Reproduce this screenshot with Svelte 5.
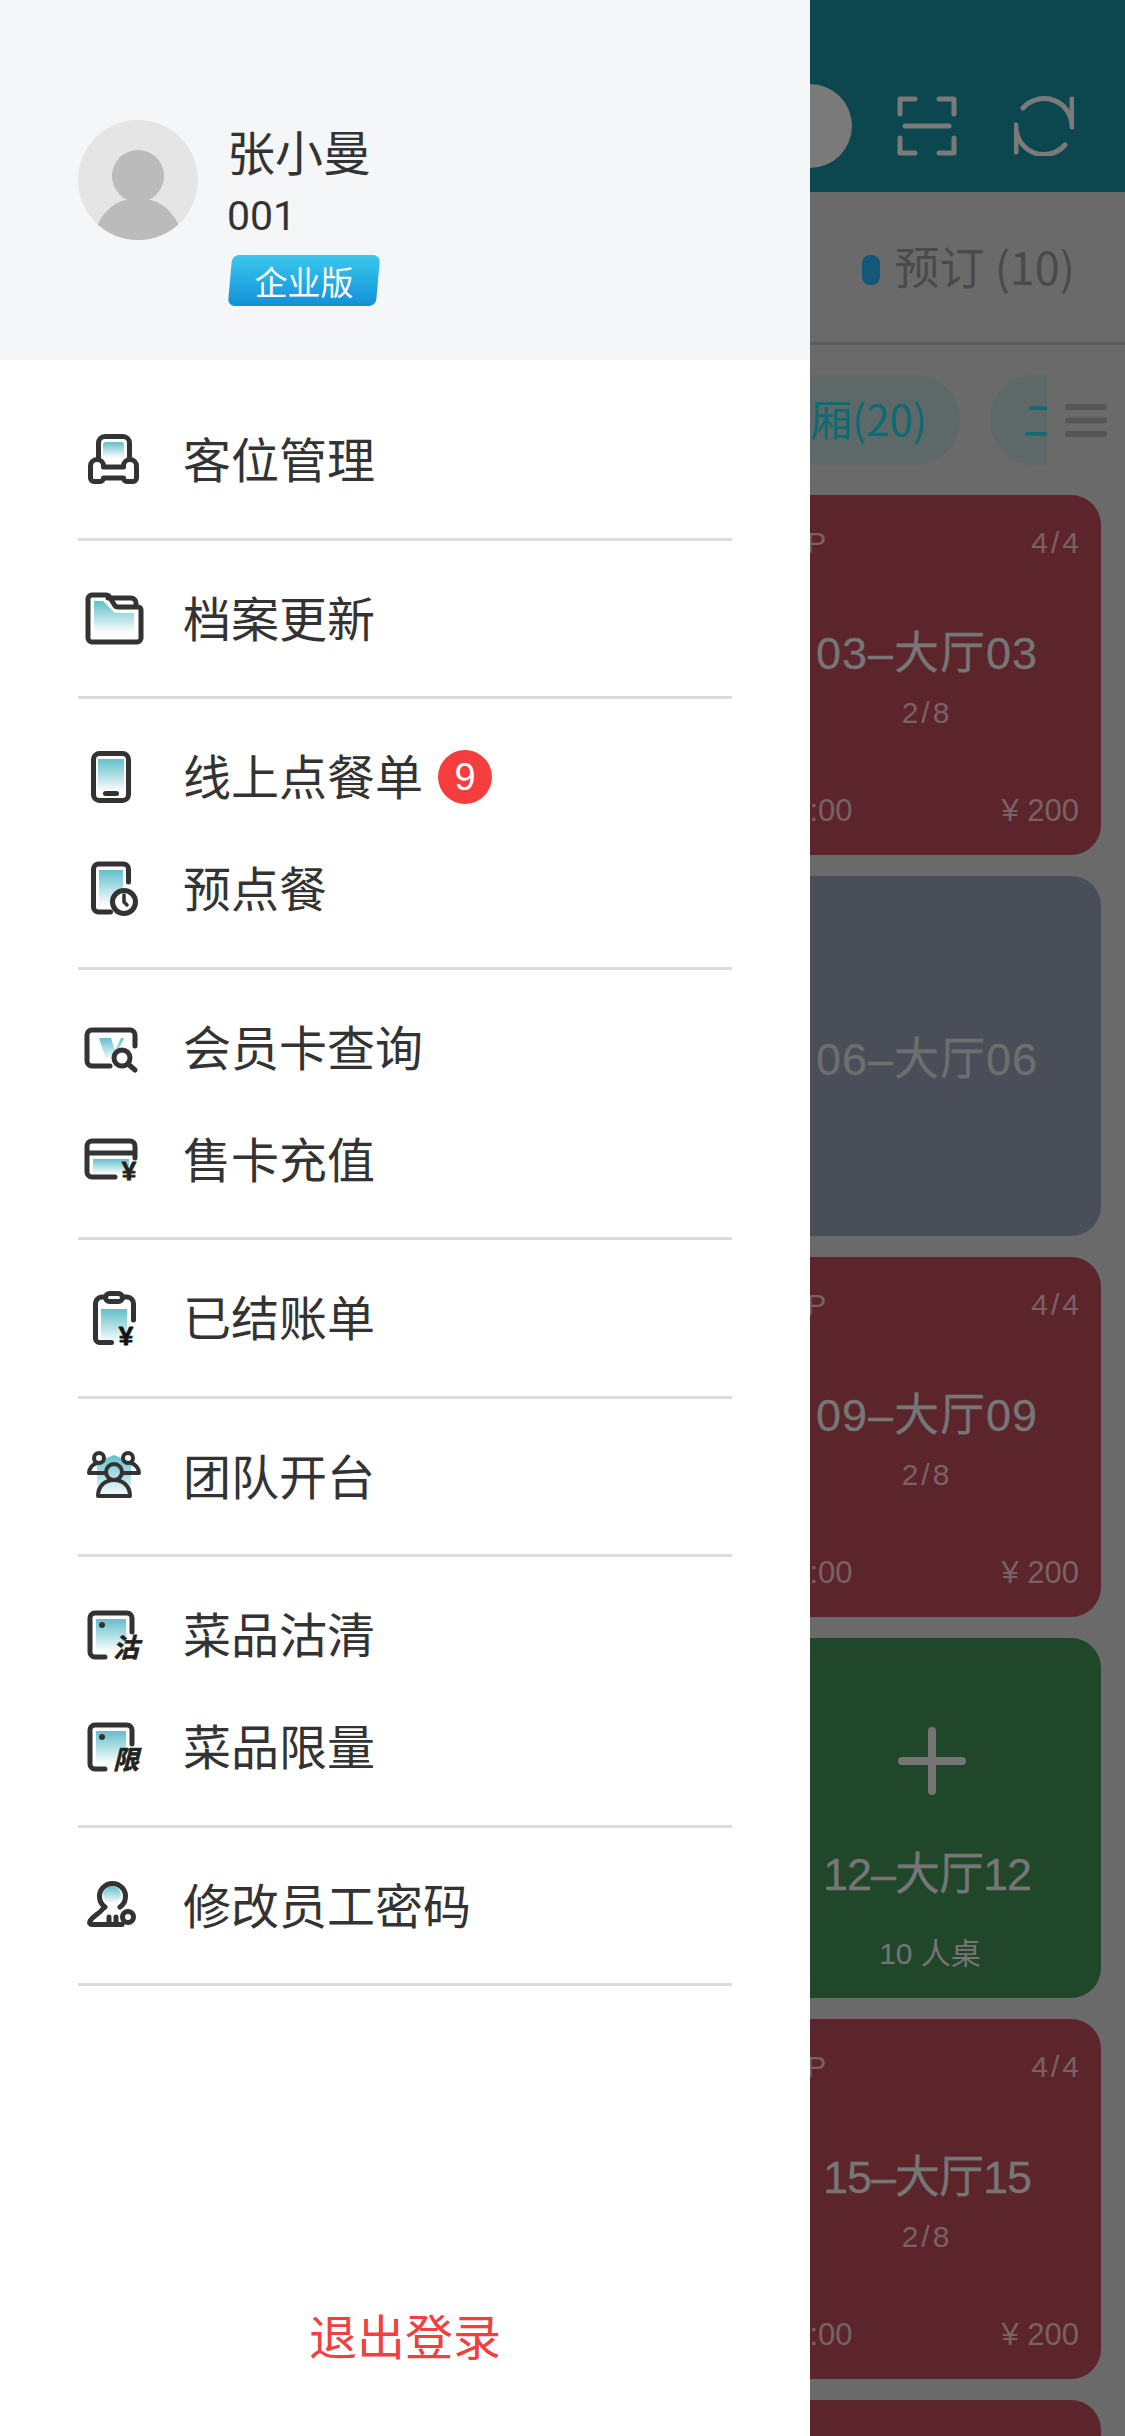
<script>
  const tables = [
    { id: '03', kind: 'busy' },
    { id: '06', kind: 'idle' },
    { id: '09', kind: 'busy' },
    { id: '12', kind: 'free' },
    { id: '15', kind: 'busy' },
    { id: '18', kind: 'blank' }
  ];
  const groups = [
    [{ t: '客位管理', i: 'sofa' }],
    [{ t: '档案更新', i: 'folder' }],
    [{ t: '线上点餐单', i: 'phone', badge: 9 }, { t: '预点餐', i: 'pre' }],
    [{ t: '会员卡查询', i: 'vip' }, { t: '售卡充值', i: 'card' }],
    [{ t: '已结账单', i: 'bill' }],
    [{ t: '团队开台', i: 'team' }],
    [{ t: '菜品沽清', i: 'sold', ch: '沽' }, { t: '菜品限量', i: 'sold', ch: '限' }],
    [{ t: '修改员工密码', i: 'key' }]
  ];
</script>

<div class="screen">
  <div class="page">
    <header class="top">
      <div class="search"></div>
      <svg class="top-icon" viewBox="0 0 60 60" fill="none" stroke="#7a7a7a" stroke-width="5" stroke-linecap="round" stroke-linejoin="round">
        <path d="M3 18V3h15M42 3h15v15M3 42v15h15M42 57h15V42M8 30h44" />
      </svg>
      <svg class="top-icon" viewBox="0 0 60 60" fill="none" stroke="#7a7a7a" stroke-width="5" stroke-linecap="round" stroke-linejoin="round">
        <path d="M9 12A28 28 0 0 1 58 31V3M51 49A28 28 0 0 1 2 29V56" />
      </svg>
    </header>
    <div class="status">
      <i class="dot"></i>
      <span class="status-text">预订 (10)</span>
    </div>
    <div class="chips">
      <div class="chip-clip">
        <span class="chip">包厢(20)</span>
        <span class="chip">二楼(20)</span>
      </div>
      <svg class="menu-icon" viewBox="0 0 42 33" fill="#565656">
        <rect y="0" width="42" height="6" rx="3" /><rect y="13.5" width="42" height="6" rx="3" /><rect y="27" width="42" height="6" rx="3" />
      </svg>
    </div>
    <div class="cards">
      {#each tables as c}
        <article class="card {c.kind}">
          {#if c.kind === 'busy'}
            <div class="row"><span class="vip">VIP</span><span class="frac end">4/4</span></div>
            <h3 class="title" class:narrow={c.id[0] === '1'}>{c.id}–大厅{c.id}</h3>
            <div class="sub frac">2/8</div>
            <div class="row foot"><span>00:00</span><span>¥ 200</span></div>
          {:else if c.kind === 'idle'}
            <h3 class="title mid">{c.id}–大厅{c.id}</h3>
          {:else if c.kind === 'free'}
            <svg class="plus" viewBox="0 0 68 68" fill="#757575">
              <rect x="0" y="30" width="68" height="8" rx="4" /><rect x="30" y="0" width="8" height="68" rx="4" />
            </svg>
            <h3 class="title free-title narrow">{c.id}–大厅{c.id}</h3>
            <div class="seats">10 人桌</div>
          {/if}
        </article>
      {/each}
    </div>
  </div>

  <aside class="drawer">
    <div class="profile">
      <svg class="avatar" viewBox="0 0 120 120">
        <defs><clipPath id="av"><circle cx="60" cy="60" r="60" /></clipPath></defs>
        <circle cx="60" cy="60" r="60" fill="#e5e5e5" />
        <g clip-path="url(#av)" fill="#bbbbbb">
          <circle cx="60" cy="56" r="26" />
          <ellipse cx="60" cy="122" rx="44" ry="44" />
        </g>
      </svg>
      <div class="who">
        <div class="name">张小曼</div>
        <div class="code">001</div>
        <div class="ver"><span>企业版</span></div>
      </div>
    </div>

    <svg width="0" height="0" class="defs">
      <defs>
        <linearGradient id="tl" x1="0" y1="0" x2="0" y2="1">
          <stop offset="0" stop-color="#62bfcb" /><stop offset="1" stop-color="#ffffff" />
        </linearGradient>
      </defs>
    </svg>

    <nav class="menu">
      {#each groups as g}
        <div class="group">
          {#each g as it}
            <div class="item">
              <svg class="ic" viewBox="0 0 60 60" fill="none" stroke="#333" stroke-width="5" stroke-linecap="round" stroke-linejoin="round">
                {#if it.i === 'sofa'}
                  <rect x="19" y="12" width="21" height="16" rx="3" fill="url(#tl)" stroke="none" />
                  <path d="M14.5 27V13a6.5 6.5 0 0 1 6.5-6.5h18a6.5 6.5 0 0 1 6.5 6.5v14" />
                  <path d="M19.5 37H39.5V36a6.5 6.5 0 0 1 13 0V48a3.5 3.5 0 0 1-3.5 3.5h-6a3.5 3.5 0 0 1-3.5-3.5H19.5a3.5 3.5 0 0 1-3.5 3.5H10a3.5 3.5 0 0 1-3.5-3.5V36a6.5 6.5 0 0 1 13 0z" />
                {:else if it.i === 'folder'}
                  <path d="M10 12h9l12 12h19v20H10z" fill="url(#tl)" stroke="none" />
                  <path d="M4 10a4 4 0 0 1 4-4h14a4 4 0 0 1 3.500 2l5 8a4 4 0 0 0 3.500 2h20a3 3 0 0 1 3 3v28a4 4 0 0 1-4 4H8a4 4 0 0 1-4-4z" />
                  <path d="M24 9h23a5 5 0 0 1 5 5v3" />
                {:else if it.i === 'phone'}
                  <rect x="14" y="12" width="26" height="33" fill="url(#tl)" stroke="none" />
                  <rect x="9.500" y="6.500" width="35" height="47" rx="6" />
                  <path d="M21.500 46.500h11" />
                {:else if it.i === 'pre'}
                  <rect x="15" y="11" width="24" height="36" fill="url(#tl)" stroke="none" />
                  <path d="M44.500 23V10a5 5 0 0 0-5-5h-25a5 5 0 0 0-5 5v38a5 5 0 0 0 5 5h12" />
                  <circle cx="40" cy="43" r="11.500" fill="#fff" />
                  <path d="M40 36v7l3 3" stroke-width="3.500" />
                {:else if it.i === 'vip'}
                  <path d="M15 20H27L31 32L37 20H40L30 42H22Z" fill="url(#tl)" stroke="none" />
                  <path d="M51 28V17a5 5 0 0 0-5-5H8a5 5 0 0 0-5 5v26a5 5 0 0 0 5 5h18" />
                  <circle cx="38" cy="40" r="8" fill="#fff" />
                  <path d="M44 46l7 6" />
                {:else if it.i === 'card'}
                  <rect x="9" y="29" width="36" height="15" fill="url(#tl)" stroke="none" />
                  <path d="M51 28V16a5 5 0 0 0-5-5H8a5 5 0 0 0-5 5v26a5 5 0 0 0 5 5h23M3 23h48" />
                  <text x="45" y="50" class="yen">¥</text>
                {:else if it.i === 'bill'}
                  <rect x="17" y="21" width="26" height="34" fill="url(#tl)" stroke="none" />
                  <rect x="21.500" y="5.500" width="17" height="8" rx="4" />
                  <path d="M21 9h-3a6.500 6.500 0 0 0-6.500 6.500v35a4 4 0 0 0 4 4h12M39 9h4a6.500 6.500 0 0 1 6.500 6.500V32" />
                  <text x="42" y="57" class="yen black">¥</text>
                {:else if it.i === 'team'}
                  <path d="M30 8l17 7v28l-5 8H18l-5-8V15z" fill="url(#tl)" stroke="none" />
                  <g stroke-width="4">
                    <circle cx="15" cy="11" r="5" /><circle cx="44" cy="11" r="5" />
                    <path d="M20 26H5c0-5 4-9 8-10M39 26h16c0-5-4-9-8-10" />
                    <circle cx="30" cy="25" r="8" />
                    <path d="M14 49c0-10 7-16 16-16s16 6 16 16z" />
                  </g>
                {:else if it.i === 'sold'}
                  <rect x="12" y="14" width="30" height="33" fill="url(#tl)" stroke="none" />
                  <circle cx="18" cy="20" r="3" fill="#333" stroke="none" />
                  <path d="M48 27V13a5 5 0 0 0-5-5H11a5 5 0 0 0-5 5v34a5 5 0 0 0 5 5h10" />
                  <text x="55" y="52" class="stamp">{it.ch}</text>
                {:else if it.i === 'key'}
                  <circle cx="28" cy="19" r="9" fill="url(#tl)" stroke="none" />
                  <path d="M21 31a13 13 0 1 1 15 0" />
                  <path d="M20 31c-3 6-10 8-14 14-1 2 0 3.500 2 3.500h30M25 47v-6M32 47v-6" />
                  <circle cx="44" cy="41" r="5.500" />
                {/if}
              </svg>
              <span class="label">{it.t}</span>
              {#if it.badge}<b class="badge">{it.badge}</b>{/if}
            </div>
          {/each}
        </div>
      {/each}
    </nav>

    <div class="logout">退出登录</div>
  </aside>
</div>

<style>
  :global(body) {
    margin: 0;
    background: #6a6a6a;
  }
  .screen {
    position: relative;
    width: 1125px;
    height: 2436px;
    overflow: hidden;
    font-family: 'Liberation Sans', 'Noto Sans CJK SC', sans-serif;
  }
  .page {
    width: 100%;
    height: 100%;
    background: #6a6a6a;
    display: flex;
    flex-direction: column;
  }
  .top {
    flex: none;
    height: 192px;
    background: #0c464e;
    display: flex;
    align-items: center;
    justify-content: flex-end;
    padding-right: 51px;
    padding-top: 60px;
    box-sizing: border-box;
    gap: 57px;
  }
  .search {
    width: 300px;
    height: 84px;
    border-radius: 42px;
    background: #7a7a7a;
    margin-right: -12px;
  }
  .top-icon {
    width: 60px;
    height: 60px;
  }
  .status {
    flex: none;
    height: 153px;
    box-sizing: border-box;
    border-bottom: 3px solid #5c5c5c;
    display: flex;
    align-items: center;
    justify-content: flex-end;
    gap: 15px;
    padding: 6px 50px 0 0;
    color: #4a4a4a;
    font-size: 45px;
    font-family: 'Noto Sans CJK SC', sans-serif;
  }
  .status-text {
    margin-top: -9px;
  }
  .dot {
    width: 18px;
    height: 30px;
    border-radius: 8px;
    background: #15577a;
  }
  .chips {
    flex: none;
    height: 150px;
    box-sizing: border-box;
    padding: 30px 18px 30px 0;
    display: flex;
    align-items: center;
    justify-content: flex-end;
  }
  .chip-clip {
    width: 500px;
    height: 90px;
    overflow: hidden;
    display: flex;
    gap: 30px;
    margin-right: 18px;
  }
  .chip {
    flex: none;
    height: 90px;
    line-height: 85px;
    border-radius: 45px;
    background: #5d6868;
    color: #0e6a73;
    font-size: 42px;
    padding: 0 33px;
    white-space: nowrap;
    font-family: 'Noto Sans CJK SC', sans-serif;
  }
  .chip:first-child {
    margin-left: 188px;
  }
  .menu-icon {
    width: 42px;
    height: 33px;
    flex: none;
  }
  .cards {
    align-self: flex-end;
    width: 348px;
    margin-right: 24px;
    display: flex;
    flex-direction: column;
    gap: 21px;
  }
  .card {
    position: relative;
    flex: none;
    height: 360px;
    border-radius: 30px;
    box-sizing: border-box;
    padding: 30px 22px 26px;
    display: flex;
    flex-direction: column;
    align-items: center;
    color: #7a6166;
    font-size: 28px;
  }
  .busy,
  .blank {
    background: #5c252c;
  }
  .idle {
    background: #4a4e58;
    justify-content: center;
    color: #6e6e6e;
  }
  .free {
    background: #20472a;
    color: #757575;
  }
  .row {
    align-self: stretch;
    display: flex;
    justify-content: space-between;
    font-size: 30px;
    line-height: 36px;
  }
  .vip {
    margin-left: 3px;
  }
  .frac {
    letter-spacing: 3px;
  }
  .frac.end {
    margin-right: -3px;
  }
  .foot {
    margin-top: auto;
    font-size: 31px;
  }
  .title {
    margin: 65px 0 0;
    font-weight: 400;
    font-size: 45px;
    line-height: 56px;
    letter-spacing: 1px;
    color: #767676;
    -webkit-text-stroke: 0.3px #767676;
  }
  .title.narrow {
    letter-spacing: -1px;
  }
  .title.mid {
    margin: 3px 0 0;
    color: #6e6e6e;
    -webkit-text-stroke: 0.3px #6e6e6e;
  }
  .sub {
    font-size: 30px;
    line-height: 36px;
    margin-top: 13px;
  }
  .plus {
    width: 68px;
    height: 68px;
    margin: 59px 0 0 10px;
    flex: none;
  }
  .title.free-title {
    margin-top: 52px;
  }
  .seats {
    font-size: 30px;
    margin: 33px 0 0 6px;
    line-height: 36px;
  }
  .drawer {
    position: absolute;
    left: 0;
    top: 0;
    bottom: 0;
    width: 810px;
    background: #fff;
    display: flex;
    flex-direction: column;
    color: #333;
    font-family: 'Noto Sans CJK SC', sans-serif;
  }
  .profile {
    height: 360px;
    flex: none;
    background: #f5f6f8;
    display: flex;
    align-items: flex-start;
    box-sizing: border-box;
    padding: 120px 0 0 78px;
    gap: 29px;
  }
  .avatar {
    width: 120px;
    height: 120px;
    flex: none;
  }
  .who {
    margin-top: -3px;
  }
  .name {
    font-size: 48px;
    line-height: 66px;
  }
  .code {
    font-size: 41px;
    line-height: 60px;
    padding-top: 3px;
    height: 57px;
    box-sizing: border-box;
    font-family: 'Roboto', sans-serif;
  }
  .ver {
    position: relative;
    width: 148px;
    height: 51px;
    margin: 15px 0 0 3px;
    display: flex;
    align-items: center;
    justify-content: center;
    color: #fff;
    font-size: 33px;
    z-index: 0;
  }
  .ver::before {
    content: '';
    position: absolute;
    inset: 0;
    z-index: -1;
    border-radius: 7px;
    transform: skewX(-5deg);
    background: linear-gradient(#3bc8ee, #1290d7);
  }
  .defs {
    position: absolute;
  }
  .menu {
    padding: 22.25px 78px 0;
  }
  .group {
    padding: 21.75px 0;
    border-bottom: 3px solid #dcdcdc;
  }
  .item {
    height: 112px;
    display: flex;
    align-items: center;
    font-size: 48px;
  }
  .ic {
    width: 60px;
    height: 60px;
    flex: none;
    margin: 0 39px 0 6px;
  }
  .label {
    white-space: nowrap;
    padding-bottom: 6px;
  }
  .badge {
    width: 54px;
    height: 54px;
    margin-left: 15px;
    border-radius: 50%;
    background: #f53d3d;
    color: #fff;
    font-weight: 400;
    font-size: 38px;
    display: flex;
    align-items: center;
    justify-content: center;
    font-family: 'Liberation Sans', sans-serif;
  }
  .yen {
    font-family: 'Liberation Sans', sans-serif;
    font-weight: 700;
    font-size: 26px;
    fill: #222;
    stroke: #222;
    stroke-width: 0.8px;
    text-anchor: middle;
  }
  .yen.black {
    fill: #111;
    stroke: #111;
  }
  .stamp {
    font-family: 'Noto Sans CJK SC', sans-serif;
    font-weight: 700;
    font-style: italic;
    font-size: 26px;
    fill: #222;
    stroke: #222;
    stroke-width: 0.6px;
    text-anchor: end;
  }
  .logout {
    margin-top: auto;
    margin-bottom: 67px;
    text-align: center;
    color: #f04040;
    font-size: 48px;
    line-height: 70px;
  }
</style>
